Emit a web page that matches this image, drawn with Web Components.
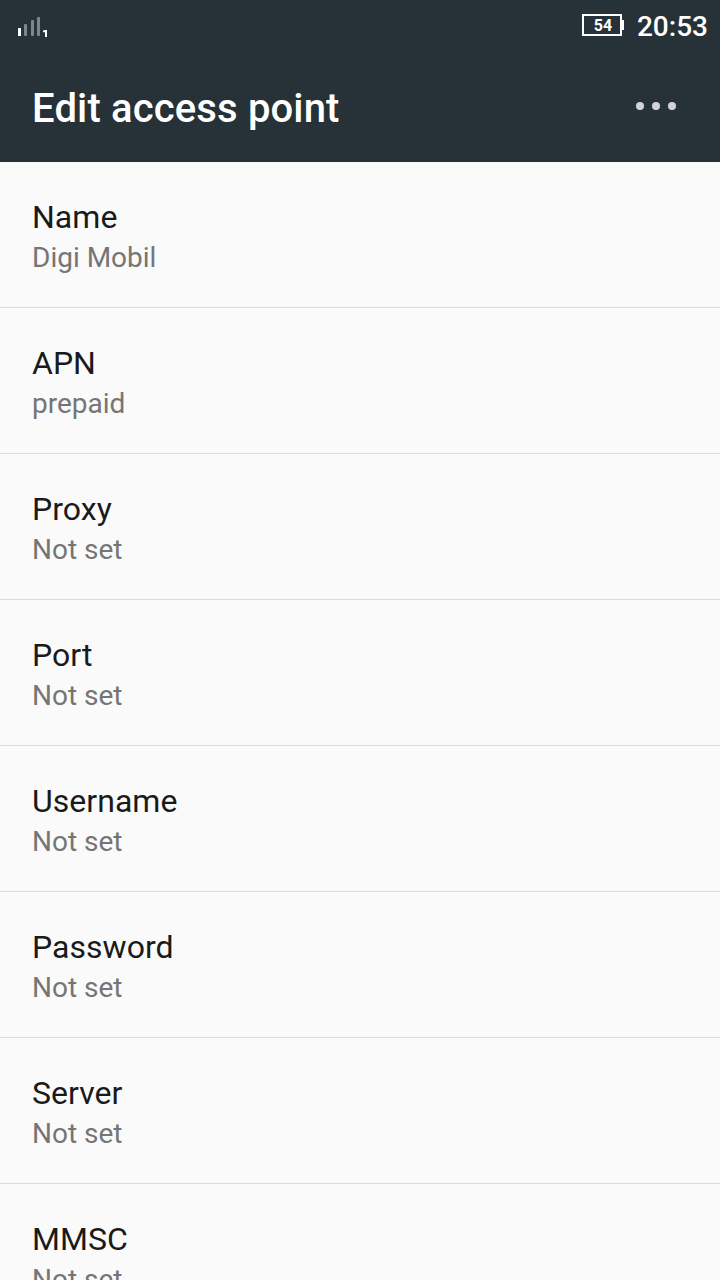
<!DOCTYPE html>
<html lang="en"><head><meta charset="utf-8"><title>Edit access point</title>
<style>html,body{margin:0;height:1280px;overflow:hidden;background:#fafafa;font-family:Roboto,sans-serif}</style></head>
<body><apn-screen></apn-screen>
<script>
const define=(name,html)=>customElements.define(name,class extends HTMLElement{
  constructor(){super();this.attachShadow({mode:'open'}).innerHTML=html;}
});
define('status-bar',`<style>
:host{display:flex;height:50px;align-items:center;justify-content:space-between;box-sizing:border-box;padding:2px 12px 0 16px;color:#fff}
svg{display:block}.right{display:flex;align-items:center;gap:13px}
.time{font-weight:500;font-size:28px;line-height:48px;padding-top:1px;margin-bottom:-1px}
</style>
<svg width="34" height="24" viewBox="16 14 34 24"><rect x="18" y="28" width="3" height="8" rx=".6" fill="#fff"/><path fill="#fff" d="M43 30.500 45.500 30h1.500v7h-2v-4.800h-2z"/><g fill="#7f8689"><rect x="24" y="24" width="3" height="12" rx="1"/><rect x="31" y="20" width="3" height="16" rx="1"/><rect x="37" y="17" width="3" height="19" rx="1"/></g></svg>
<div class="right"><svg width="42" height="24" viewBox="0 0 42 24"><rect x="1" y="1" width="38" height="20" fill="none" stroke="#fff" stroke-width="2"/><path fill="#fff" d="M40 6h2v10h-2z"/><text x="21" y="17" text-anchor="middle" font-size="16" font-weight="700" fill="#fff">54</text></svg><span class="time">20:53</span></div>`);
define('app-bar',`<style>
:host{display:flex;height:112px;box-sizing:border-box;align-items:center;justify-content:space-between;padding:6px 44px 0 32px;color:#fff}
h1{margin:0;font-size:40px;line-height:48px;font-weight:500;letter-spacing:.15px}svg{display:block;margin-top:2px}
</style><h1><slot></slot></h1><svg width="40" height="16" viewBox="0 0 40 16"><g fill="#d4d4d4"><circle cx="4" cy="4" r="4"/><circle cx="20" cy="4" r="4"/><circle cx="36" cy="4" r="4"/></g></svg>`);
define('setting-row',`<style>
:host{display:flex;flex-direction:column;height:146px;box-sizing:border-box;padding:34px 32px 0;border-bottom:1px solid #dadada}
.label{font-size:32px;line-height:42px;color:#1a1a1a;letter-spacing:.03px}.value{font-size:28px;line-height:40px;color:#757575}
</style><span class="label"><slot></slot></span><span class="value"><slot name="value"></slot></span>`);
define('apn-screen',`<style>
:host{display:block;width:720px;height:1280px;overflow:hidden}header{background:#263238}
</style><header><status-bar></status-bar><app-bar>Edit access point</app-bar></header>
<main>${[['Name','Digi Mobil'],['APN','prepaid'],['Proxy','Not set'],['Port','Not set'],['Username','Not set'],['Password','Not set'],['Server','Not set'],['MMSC','Not set']].map(([l,v])=>`<setting-row>${l}<span slot="value">${v}</span></setting-row>`).join('')}</main>`);
</script></body></html>
